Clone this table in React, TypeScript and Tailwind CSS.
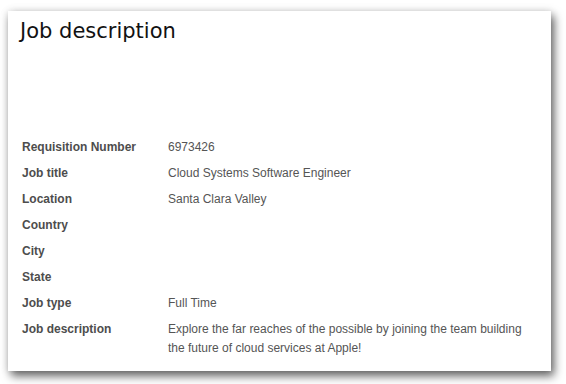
const rows: { label: string; value?: string }[] = [
  { label: 'Requisition Number', value: '6973426' },
  { label: 'Job title', value: 'Cloud Systems Software Engineer' },
  { label: 'Location', value: 'Santa Clara Valley' },
  { label: 'Country' },
  { label: 'City' },
  { label: 'State' },
  { label: 'Job type', value: 'Full Time' },
  {
    label: 'Job description',
    value:
      'Explore the far reaches of the possible by joining the team building the future of cloud services at Apple!',
  },
];

const App = () => {
  return (
    <div className="w-[566px] h-[384px] bg-white pt-[11px] pl-[8px] overflow-hidden">
      <div className="w-[543px] h-[360px] bg-white shadow-[3px_5px_9px_rgba(0,0,0,0.6),0_0_8px_rgba(0,0,0,0.12)] pt-[7px]">
        <h2 className="pl-[12px] text-[21px] leading-[26px] text-[#111] font-['DejaVu_Sans',sans-serif]">
          Job description
        </h2>
        <dl className="mt-[90px] pl-[14px] font-['Liberation_Sans',Arial,sans-serif] text-[12px] leading-[19px]">
          {rows.map((row) => (
            <div key={row.label} className="flex py-[3.5px]">
              <dt className="w-[146px] shrink-0 font-bold text-[#4d4d4d]">{row.label}</dt>
              <dd className="w-[360px] text-[#555]">{row.value}</dd>
            </div>
          ))}
        </dl>
      </div>
    </div>
  );
};

export default App;
